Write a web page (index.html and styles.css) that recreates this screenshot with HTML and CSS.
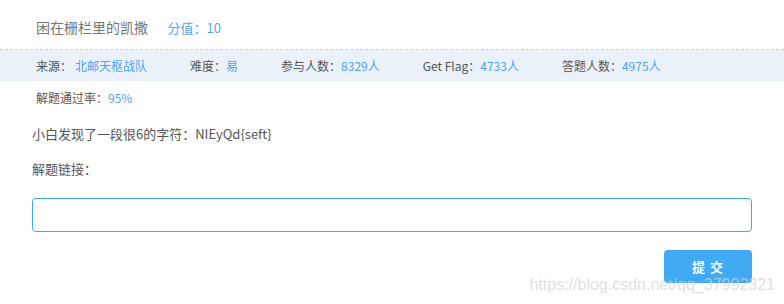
FILE: index.html
```html
<!DOCTYPE html>
<html lang="zh-CN">
<head>
<meta charset="utf-8">
<title>困在栅栏里的凯撒</title>
<link rel="stylesheet" href="styles.css">
</head>
<body>
<div class="page">
  <div class="header">
    <span class="title">困在栅栏里的凯撒</span>
    <span class="score">分值：10</span>
  </div>
  <div class="band">
    <span class="item">来源：<span class="val val-gap">北邮天枢战队</span></span>
    <span class="item">难度：<span class="val">易</span></span>
    <span class="item">参与人数：<span class="val">8329人</span></span>
    <span class="item">Get Flag：<span class="val">4733人</span></span>
    <span class="item">答题人数：<span class="val">4975人</span></span>
  </div>
  <div class="rate">解题通过率：<span class="val">95%</span></div>
  <div class="desc">小白发现了一段很6的字符：NIEyQd{seft}</div>
  <div class="label">解题链接：</div>
  <div class="input-wrap"><input class="answer" type="text"></div>
  <div class="actions"><button class="submit">提 交</button></div>
  <div class="watermark">https://blog.csdn.net/qq_37992321</div>
</div>
</body>
</html>
```

FILE: styles.css
```css
* { box-sizing: border-box; }
html, body { margin: 0; padding: 0; background: #fff; }
body {
  font-family: "Noto Sans CJK SC", "Noto Sans", sans-serif;
  color: #666;
  width: 784px;
  height: 304px;
  overflow: hidden;
}
.page { position: relative; height: 304px; }
.header {
  height: 50px;
  padding: 15px 0 0 36px;
  border-bottom: 1px dashed #cfcfcf;
  line-height: 22px;
}
.title { font-size: 14px; color: #777; }
.score { font-size: 13px; color: #5aa5ef; margin-left: 16px; }
.band {
  background: #eaf1f8;
  height: 31px;
  padding-left: 36px;
  display: flex;
  align-items: center;
  font-size: 12px;
  color: #555;
  line-height: 16px;
}
.item { margin-right: 43px; }
.val { color: #4ea3f2; }
.val-gap { margin-left: 3px; }
.rate {
  padding-left: 36px;
  margin-top: 9px;
  font-size: 12px;
  line-height: 16px;
  color: #555;
}
.desc {
  padding-left: 32px;
  margin-top: 19px;
  font-size: 13px;
  line-height: 18px;
  color: #555;
}
.label {
  padding-left: 32px;
  margin-top: 17px;
  font-size: 13px;
  line-height: 18px;
  color: #555;
}
.input-wrap { padding: 0 32px; margin-top: 20px; }
.answer {
  display: block;
  width: 100%;
  height: 34px;
  border: 1px solid #42a5f5;
  border-radius: 4px;
  outline: none;
  background: #fff;
}
.actions {
  display: flex;
  justify-content: flex-end;
  padding-right: 32px;
  margin-top: 18px;
}
.submit {
  width: 88px;
  height: 33px;
  border: none;
  border-radius: 4px;
  background: #40aaf5;
  color: #fff;
  font-family: "Noto Sans CJK SC", sans-serif;
  font-size: 13px;
  font-weight: bold;
  letter-spacing: 1px;
  padding: 0;
}
.watermark {
  position: absolute;
  right: 9px;
  top: 276px;
  font-family: "Liberation Sans", Arial, sans-serif;
  font-size: 16px;
  line-height: 18px;
  color: rgba(210, 210, 210, 0.7);
  white-space: nowrap;
}
```
